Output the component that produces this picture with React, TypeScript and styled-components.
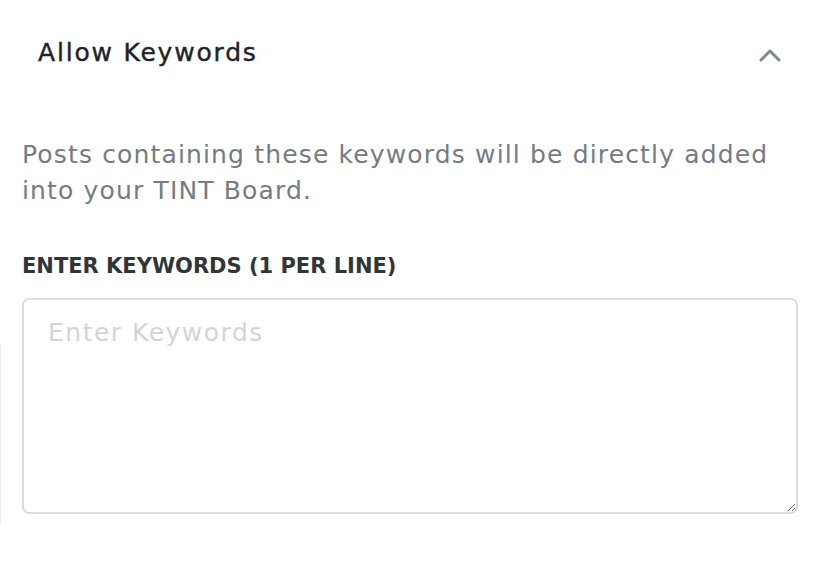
import React from 'react';
import styled, { createGlobalStyle } from 'styled-components';

const GlobalStyle = createGlobalStyle`
  body {
    margin: 0;
    background: #fff;
    font-family: 'DejaVu Sans', 'Noto Sans', sans-serif;
  }
`;

const Panel = styled.section`
  width: 828px;
  height: 562px;
  box-sizing: border-box;
  padding: 35px 31px 0 22px;
  position: relative;
`;

const Header = styled.div`
  display: flex;
  align-items: center;
  justify-content: space-between;
  height: 36px;
  padding: 0 16px 0 16px;
`;

const Title = styled.h3`
  margin: 0;
  font-size: 25px;
  line-height: 36px;
  font-weight: 400;
  letter-spacing: 1.8px;
  color: #1d232a;
  -webkit-text-stroke: 0.4px #1d232a;
`;

const Toggle = styled.button`
  border: 0;
  background: none;
  padding: 0;
  margin-top: 4px;
  display: flex;
  color: #7d8a90;
  cursor: pointer;
`;

const Description = styled.p`
  margin: 66px 0 0;
  max-width: 760px;
  font-size: 25px;
  line-height: 36px;
  letter-spacing: 1.15px;
  color: #737c84;
`;

const Label = styled.label`
  display: block;
  margin-top: 44px;
  font-size: 21px;
  line-height: 26px;
  font-weight: 700;
  color: #30353a;
`;

const Area = styled.textarea`
  display: block;
  box-sizing: border-box;
  width: 776px;
  height: 216px;
  margin-top: 19px;
  padding: 18px 24px;
  border: 2px solid #dcdcdc;
  border-radius: 7px;
  font-family: inherit;
  font-size: 25px;
  line-height: 30px;
  letter-spacing: 1.5px;
  color: #333;
  resize: vertical;
  &::placeholder {
    color: #d4d4d4;
  }
`;

const EdgeLine = styled.div`
  position: absolute;
  left: 0;
  top: 344px;
  width: 1px;
  height: 180px;
  background: #eeeeee;
`;

export default function App() {
  return (
    <>
      <GlobalStyle />
      <Panel>
        <EdgeLine />
        <Header>
          <Title>Allow Keywords</Title>
          <Toggle aria-label="Collapse">
            <svg width="22" height="13" viewBox="0 0 22 13">
              <path d="M2 11 L11 2 L20 11" fill="none" stroke="currentColor" strokeWidth="3" strokeLinecap="round" strokeLinejoin="round" />
            </svg>
          </Toggle>
        </Header>
        <Description>
          Posts containing these keywords will be directly added into your TINT Board.
        </Description>
        <Label htmlFor="kw">ENTER KEYWORDS (1 PER LINE)</Label>
        <Area id="kw" placeholder="Enter Keywords" />
      </Panel>
    </>
  );
}
